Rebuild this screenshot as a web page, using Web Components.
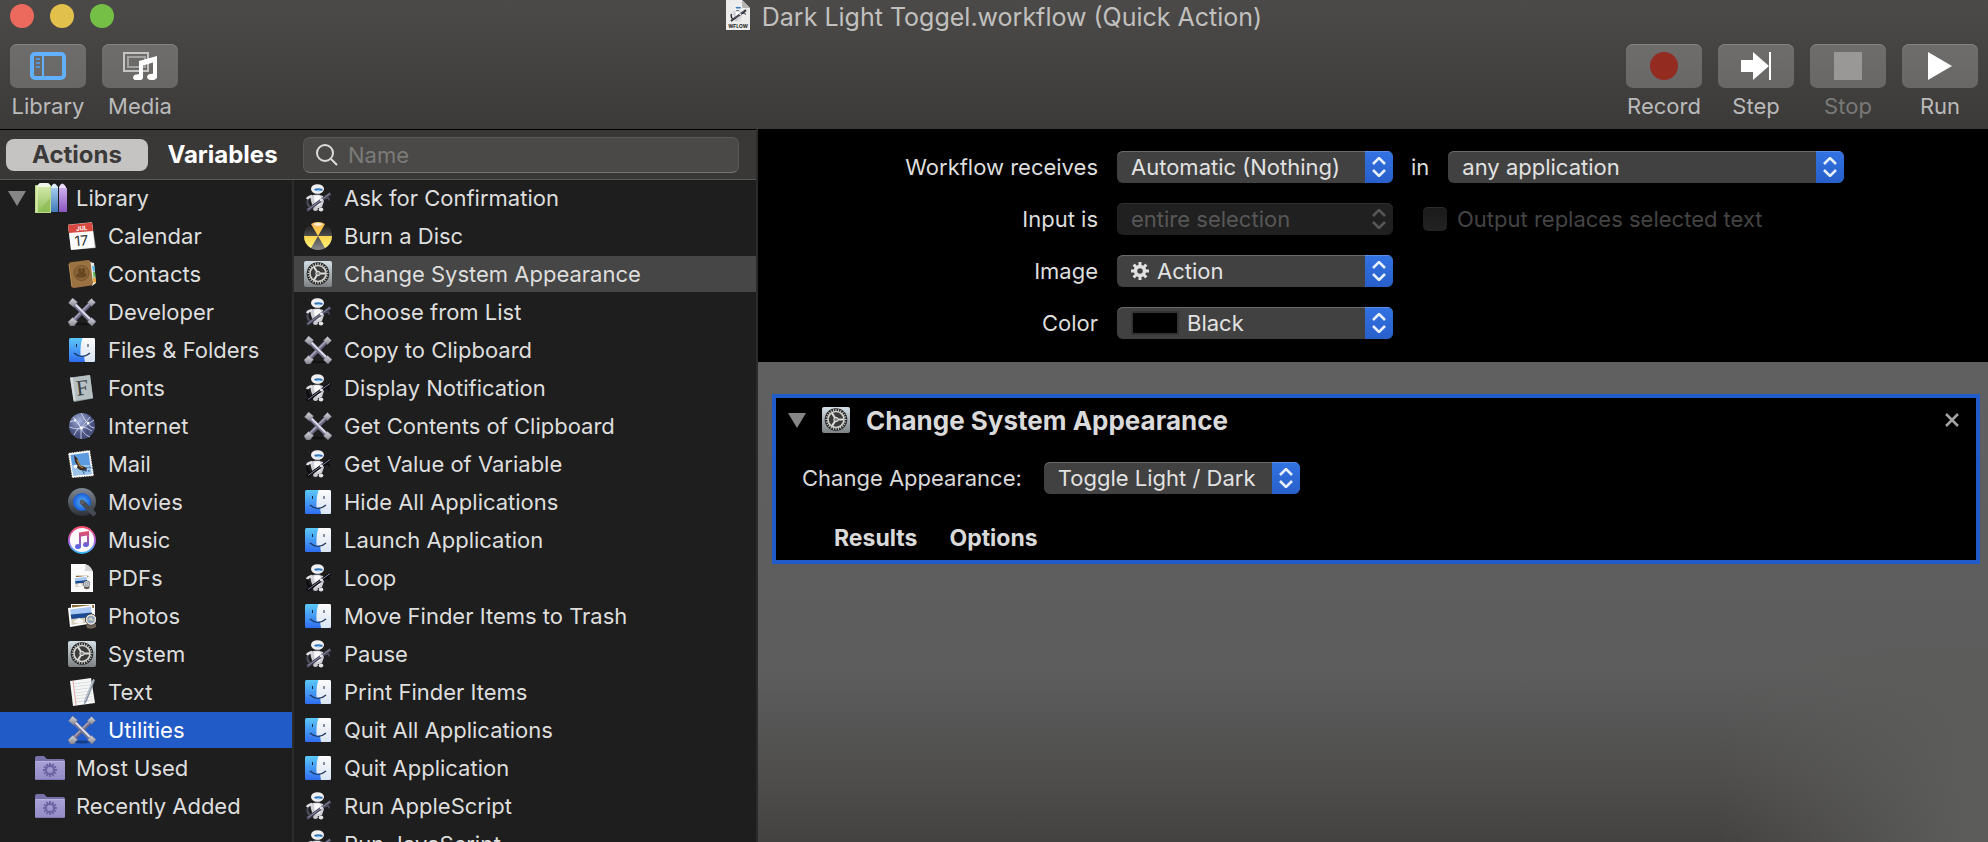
<!DOCTYPE html>
<html lang="en">
<head>
<meta charset="utf-8">
<title>Dark Light Toggel.workflow (Quick Action)</title>
<style>
    html, body {
        height: 100%;
        margin: 0;
    }

    body {
        overflow: hidden;
        background: #1e1e1e;
        font-family: Inter, "Liberation Sans", sans-serif;
        font-size: 22px;
        color: #dedede;
    }
</style>
</head>
<body>
<automator-window></automator-window>

<script>
//Icon drawings, all on a 28x28 grid unless a viewBox is given
function gearTeeth(count, cx, cy, inner, outer, width, color) {
    let out = "";
    for (let i = 0; i < count; i++) {
        out += `<rect x="${cx - width / 2}" y="${cy - outer}" width="${width}" height="${outer - inner}" fill="${color}" transform="rotate(${i * 360 / count} ${cx} ${cy})"/>`;
    }
    return out;
}

function robot(shade) {
    return `
        <path d="M4 15q-2 5 2 8" fill="none" stroke="${shade}" stroke-width="2"/>
        <ellipse cx="11.500" cy="25" rx="2.500" ry="2" fill="#c9c9cf"/>
        <ellipse cx="17" cy="25.500" rx="2.300" ry="2" fill="#e2e2e6"/>
        <path d="M6 12q6-3 13 0l1 5-2 6q-5 2.500-9 0l-2-6z" fill="#cfcfd7"/>
        <path d="M10 12q5-2 7 1l-1 8-5 1z" fill="#fbfbfd"/>
        <path d="M11 9h5v2h-5z" fill="#55555f"/>
        <path d="M8 12q-4 1-5 3" fill="none" stroke="#dfdfe5" stroke-width="2.500"/>
        <ellipse cx="13.500" cy="5" rx="6.500" ry="4.800" fill="#f1f1f4"/>
        <path d="M10 5q4-1.500 8.500 0v1.500q-4 1.500-7.500 0z" fill="#2f6fb4"/>
        <path d="M11.500 6.300q3-1 6 0-3 1.300-6 0z" fill="#8fd0ff"/>
        <path d="M3 26.500L26.500 9.500" stroke="${shade}" stroke-width="3"/>
        <path d="M20 14.500l4.500-.5 1 2.500" fill="none" stroke="${shade}" stroke-width="1.500"/>
        <path d="M4 25.500L26 9.500" stroke="#9090a8" stroke-width=".9"/>
        <circle cx="17.500" cy="16" r="1.600" fill="#e8e8ee"/>`;
}

const FINDER = `
    <rect x="1" y="2" width="26" height="24" rx="1.500" fill="url(#fl)"/>
    <path d="M14.500 2H25.500q1.500 0 1.500 1.500V24.500q0 1.500-1.500 1.500H17q-.7-3-.8-6.500H12.500Q12 9 14.500 2z" fill="url(#fr)"/>
    <path d="M8.500 8v3M20 8v3" stroke="#1c2b44" stroke-width="1"/>
    <path d="M6 17q8 7 16 0" fill="none" stroke="#1c3558" stroke-width="1.200"/>
    <defs>
        <linearGradient id="fl" x2="0" y2="1"><stop stop-color="#5cc8f8"/><stop offset="1" stop-color="#2f6df0"/></linearGradient>
        <linearGradient id="fr" x2="0" y2="1"><stop stop-color="#fbfbfc"/><stop offset="1" stop-color="#d9e4f3"/></linearGradient>
    </defs>`;

const TOOLS = `
    <defs>
        <linearGradient id="tm" x2="0" y2="1"><stop stop-color="#d6d6de"/><stop offset="1" stop-color="#85858f"/></linearGradient>
    </defs>
    <ellipse cx="14" cy="26" rx="9" ry="1.500" fill="#000" opacity=".35"/>
    <path d="M22 6L6 22" stroke="#6c6885" stroke-width="4"/>
    <path d="M21.500 5.500L5.500 21.500" stroke="#a9a8bd" stroke-width="1.500"/>
    <g fill="url(#tm)" stroke="#77778a" stroke-width=".5">
        <path d="M23.500.500l4 4-4 4-4-4z"/>
        <path d="M4.500 19.500l5 4-3.500 4.500H2.500L0 24z"/>
    </g>
    <path d="M6 6l17 17" stroke="#77748f" stroke-width="4"/>
    <path d="M6.500 5.500l17 17" stroke="#ddddea" stroke-width="1.800"/>
    <g fill="url(#tm)" stroke="#77778a" stroke-width=".5">
        <path d="M4.500 0l5 4-4 5-5-4z"/>
        <path d="M23.500 19.500l4.500 4-4 4.500-4.500-4z"/>
    </g>`;

const SYSTEM = `
    <defs><linearGradient id="sy" x2="0" y2="1"><stop stop-color="#d3e0e6"/><stop offset="1" stop-color="#7c8083"/></linearGradient></defs>
    <rect y="1" width="28" height="26" rx="2" fill="url(#sy)"/>
    <circle cx="14" cy="13.500" r="11.300" fill="#1e1e1f"/>
    ${gearTeeth(24, 14, 13.5, 8, 10.6, 1.2, "#b9b9b7")}
    <circle cx="14" cy="13.500" r="8" fill="#3b3b3b" stroke="#cfcfca" stroke-width="1.600"/>
    <path d="M14 13.500h7.500M14 13.500l-4-6.500M14 13.500L10 20" stroke="#dededa" stroke-width="2"/>
    <circle cx="14" cy="13.500" r="2.200" fill="#8a8a88" stroke="#e6e6e2" stroke-width="1"/>`;

const PHOTOS = `
    <path d="M3 2l24 0v19l-24 0z" fill="#fff"/>
    <path d="M4 3h22v3H4z" fill="#8a6a35"/>
    <path d="M0 6l24-3 2 18-24 4z" fill="#fff"/>
    <path d="M2 7.500l21-2.700.6 6-20.800 2z" fill="#a9c9f4"/>
    <path d="M2.700 12.500l21-2 .7 5-21 2z" fill="#1d4b93"/>
    <path d="M3.200 17l21-2 .4 4.500-21 3.500z" fill="#d4cdb9"/>
    <path d="M5 20l6-4 5 3-4 3z" fill="#f7f7f7"/>
    <path d="M18 22h10v3q-4 3-9 1z" fill="#6b6154"/>
    <circle cx="23" cy="17.500" r="5.500" fill="#5f6c80" stroke="#262626" stroke-width="1"/>
    <circle cx="23" cy="17.500" r="4.500" fill="#8da3bf" stroke="#e9e4da" stroke-width="1.500"/>
    <path d="M20 18l3-3 3 4z" fill="#d5cdb5"/>`;

const FOLDER = `
    <path d="M1 4q0-2 2-2h7l3 3h16q2 0 2 2v4H1z" fill="#7771aa"/>
    <rect x="1" y="7" width="30" height="19" rx="1.500" fill="url(#fo)"/>
    <path d="M2 25.500h28" stroke="#8078b4"/>
    <path d="M1.500 7.500h29" stroke="#b6b1de"/>
    ${gearTeeth(12, 16, 16, 4, 7, 2, "#6c64a2")}
    <circle cx="16" cy="16" r="4" fill="none" stroke="#6c64a2" stroke-width="2"/>
    <defs><linearGradient id="fo" x2="0" y2="1"><stop stop-color="#a8a2d6"/><stop offset="1" stop-color="#928bc6"/></linearGradient></defs>`;

const ICONS = {
    library: ["0 0 32 32", `
        <defs>
            <linearGradient id="l1" x2="0" y2="1"><stop stop-color="#d3e8ac"/><stop offset="1" stop-color="#8fbf58"/></linearGradient>
            <linearGradient id="l2" x2="0" y2="1"><stop stop-color="#a5cbee"/><stop offset="1" stop-color="#3f78b8"/></linearGradient>
            <linearGradient id="l3" x2="0" y2="1"><stop stop-color="#cdb0ee"/><stop offset="1" stop-color="#8a55c0"/></linearGradient>
        </defs>
        <path d="M0 4q0-1 1-1h2q1-2 3-2h6q2 0 3 2h1v28H0z" fill="#b9d98b"/>
        <path d="M3 3q1-2 3-2h6q2 0 3 2v2H2z" fill="#f1f5ea"/>
        <path d="M2 5h13v25H2z" fill="url(#l1)"/>
        <path d="M15 30V16L8 24 6 30z" fill="#8cbb52" opacity=".6"/>
        <path d="M16 5q3-7 7 0v25h-7z" fill="#dfeefa"/>
        <path d="M16 6h7v24h-7z" fill="url(#l2)"/>
        <path d="M24 5q3-7 7 0v25h-7z" fill="#eadff7"/>
        <path d="M24 6h8v24h-8z" fill="url(#l3)"/>
        <path d="M2 4v26" stroke="#f6f5c0"/>`],
    calendar: ["0 0 28 28", `
        <path d="M0 2.500L24 0l4 26-25 2z" fill="#8d8d8d"/>
        <path d="M0 3L24 .5 27 25.500 3 28z" fill="#fbfbfb"/>
        <path d="M0 3L24 .5 25 9 1 11z" fill="#d8483f"/>
        <text x="8" y="8.500" font-size="6" font-weight="700" fill="#fff" transform="rotate(-5 13 6)">JUL</text>
        <text x="6.500" y="23.500" font-size="14" fill="#333" transform="rotate(-5 14 18)">17</text>`],
    contacts: ["0 0 28 28", `
        <path d="M22 2l4 1 2 20-4 3z" fill="#e9e9e4"/>
        <path d="M24 6l2.500 0 .5 5-2 .5z" fill="#58b7e8"/>
        <path d="M25 12h2l.5 5-2 .5z" fill="#63b652"/>
        <path d="M25 18h2.500l.5 4-2.500 1z" fill="#eda32e"/>
        <path d="M1 4Q1 2.500 2.500 2.300L20 0q2 0 2.300 1.500L25 23q0 2-2 2.400L6 28q-2 0-2.300-2z" fill="#9a7140"/>
        <path d="M1 4l3 23" stroke="#b98d56"/>
        <circle cx="13.500" cy="13" r="7.500" fill="#8b6537" stroke="#765128"/>
        <path d="M8 16.500q0-3 2.500-3.500-1-4.500 1-5 2.500 0 1.700 4l.8 0q-.8-4 1.500-4 2.500.8 1 5 2.500.5 2.500 2.500-5 4-11 1z" fill="#654721"/>`],
    tools: ["0 0 28 28", TOOLS],
    finder: ["0 0 28 28", FINDER],
    fonts: ["0 0 28 28", `
        <path d="M2 3.500L22 1l3 23.500L6 28z" fill="#8e989b"/>
        <path d="M5 3.500L22 1l3 23-17 2.500z" fill="#b6bfc2"/>
        <path d="M2 3.500l3.500 23.500 2.500-.5-3-23z" fill="#d3dadd"/>
        <text x="8" y="21" font-family="Liberation Serif, serif" font-size="22" fill="#3a4042" transform="rotate(-7 14 14)">F</text>`],
    internet: ["0 0 28 28", `
        <defs><radialGradient id="gl" cx=".4" cy=".3"><stop stop-color="#a7b3dc"/><stop offset="1" stop-color="#47507f"/></radialGradient></defs>
        <circle cx="14" cy="14" r="13" fill="url(#gl)"/>
        <path d="M5 5q6 5 8 11t9 9M1.500 15q8 3 12 1T26 8M13 1q3 7 10 14l3.500 1M6 23q4-8 8-8t10 4M13 27V16L22 5M2 10q6-4 11 6" fill="none" stroke="#dfe4f7" stroke-width=".8"/>
        <circle cx="13.500" cy="16" r="1.500" fill="#fff"/>
        <circle cx="20" cy="11" r="1.200" fill="#fff"/>
        <circle cx="7" cy="8" r="1" fill="#fff"/>`],
    mail: ["0 0 28 28", `
        <path d="M0 3L22 0l4 26-22 2z" fill="#f6f6f6"/>
        <path d="M0 3L22 0l4 26-22 2z" fill="none" stroke="#1e1e1e" stroke-width="1" stroke-dasharray="1 1.500"/>
        <path d="M2.500 5L20.500 2.600l3 21.400-18 1.600z" fill="#5d9be0"/>
        <path d="M3.500 15l19 0 1 9-18 1.600z" fill="#9cc5ee"/>
        <path d="M6 5l3 3 3 7 7 3-1 3-6-1-4-3 2-1-3-4z" fill="#382a1d"/>
        <path d="M9 10l3 6 3 2" stroke="#a67b46" stroke-width="1.500" fill="none"/>
        <circle cx="7.500" cy="16.500" r="1.800" fill="#fff"/>
        <path d="M14 21h9M16 24a5 5 0 0 1 10-3" stroke="#2a5a90" fill="none" stroke-dasharray="2 1"/>`],
    movies: ["0 0 28 28", `
        <defs>
            <linearGradient id="qt" x2="0" y2="1"><stop stop-color="#7f8893"/><stop offset="1" stop-color="#2b3036"/></linearGradient>
            <radialGradient id="qb"><stop stop-color="#5cb4fb"/><stop offset="1" stop-color="#155bd8"/></radialGradient>
        </defs>
        <circle cx="14" cy="14" r="14" fill="url(#qt)"/>
        <circle cx="14" cy="14" r="9" fill="url(#qb)"/>
        <path d="M14 14L27 27" stroke="#454c54" stroke-width="5"/>
        <circle cx="14" cy="14" r="2.500" fill="#565d66"/>`],
    music: ["0 0 28 28", `
        <defs>
            <linearGradient id="mu" x2="0" y2="1"><stop stop-color="#f4506a"/><stop offset=".55" stop-color="#b565ea"/><stop offset="1" stop-color="#34b8f5"/></linearGradient>
            <linearGradient id="mn" x2="0" y2="1"><stop stop-color="#ee4b66"/><stop offset="1" stop-color="#4a66f2"/></linearGradient>
        </defs>
        <circle cx="14" cy="14" r="13" fill="#fbf9fc" stroke="url(#mu)" stroke-width="1.800"/>
        <path d="M11 6.500L21 5v13.500a3 2.400 0 1 1-2-2.200V9.500L13 10.500V20.500a3 2.400 0 1 1-2-2.200z" fill="url(#mn)"/>`],
    pdfs: ["0 0 28 28", `
        <path d="M3 0h14q6 2 8 8v20H3z" fill="#fbfbfb"/>
        <path d="M17 0q1 5-.5 7.500Q21 6 25 8q-2-6-8-8z" fill="#d3d3d3"/>
        <svg x="5" y="10" width="17" height="16" viewBox="0 0 28 28">${PHOTOS}</svg>`],
    photos: ["0 0 28 28", PHOTOS],
    system: ["0 0 28 28", SYSTEM],
    text: ["0 0 28 28", `
        <path d="M2 3L23 0l4 25-22 3z" fill="#f7f7f5"/>
        <path d="M5 6l17-2.200M5.500 9l17-2.200M6 12l17-2.200M6.500 15l17-2.200M7 18l17-2.200M7.500 21l17-2.200M8 24l17-2.200" stroke="#ccd1da" stroke-width=".7"/>
        <path d="M5 3l3 24" stroke="#e7a8a8" stroke-width="1"/>
        <path d="M25 1l2 1-8 21-3 4 .5-5z" fill="#8794a3"/>
        <path d="M25.500 1.500L17 23" stroke="#d4dce4" stroke-width=".8"/>`],
    folder: ["0 0 32 28", FOLDER],
    robot: ["0 0 28 28", robot("#4c4c60")],
    "robot-dark": ["0 0 28 28", robot("#0a0a10")],
    burn: ["0 0 28 28", `
        <defs>
            <linearGradient id="by" x2="0" y2="1"><stop stop-color="#f7b558"/><stop offset=".5" stop-color="#fbd34a"/><stop offset="1" stop-color="#fff27a"/></linearGradient>
            <linearGradient id="bk" x2="0" y2="1"><stop stop-color="#111"/><stop offset="1" stop-color="#8b8b8b"/></linearGradient>
        </defs>
        <circle cx="14" cy="14" r="14" fill="url(#bk)"/>
        <path d="M14 14L7 2a14 14 0 0 1 14 0zM14 14H28a14 14 0 0 1-7 12zM14 14H0a14 14 0 0 0 7 12z" fill="url(#by)"/>
        <path d="M9 2q5-2.500 10 0-5 4-10 0z" fill="#fff" opacity=".75"/>`],
    sidebar: ["0 0 36 28", `
        <rect x="2" y="2" width="32" height="24" rx="3" fill="none" stroke="#62b0fc" stroke-width="4"/>
        <path d="M13 2v24" stroke="#62b0fc" stroke-width="2"/>
        <path d="M6 7h4M6 11h4M6 15h4" stroke="#5a94d8" stroke-width="2"/>`],
    media: ["0 0 34 28", `
        <rect x="1" y="1" width="24" height="18" fill="none" stroke="#c4c4c3" stroke-width="2"/>
        <rect x="5" y="5" width="17" height="10" fill="none" stroke="#a3a3a2" stroke-width="2"/>
        <path d="M16 9l18-5v20.500a5 3.300 0 1 1-4-2.800V10.500l-10 3V25a5 3.300 0 1 1-4-2.800z" fill="#fff"/>`],
    record: ["0 0 28 28", `<circle cx="14" cy="14" r="14" fill="#932b21"/>`],
    step: ["0 0 30 28", `<path d="M0 8h12V0l16 14-16 14v-8H0z" fill="#fff"/><path d="M29 0v28" stroke="#fff" stroke-width="2"/>`],
    stop: ["0 0 28 28", `<path d="M0 0h28v28H0z" fill="#999896"/>`],
    run: ["0 0 24 28", `<path d="M0 0l24 14L0 28z" fill="#fff"/>`],
    search: ["0 0 22 22", `<circle cx="9" cy="9" r="8" fill="none" stroke="#dcdcdb" stroke-width="2"/><path d="M15 15l6 6" stroke="#dcdcdb" stroke-width="2"/>`],
    triangle: ["0 0 18 15", `<path d="M0 0h18L9 15z" fill="#868686"/>`],
    updown: ["0 0 14 20", `<path d="M1 7l6-6 6 6M1 13l6 6 6-6" fill="none" stroke="currentColor" stroke-width="2.500"/>`],
    gear: ["0 0 18 18", `${gearTeeth(8, 9, 9, 5, 9, 3, "#e2e2e2")}<circle cx="9" cy="9" r="4.500" fill="none" stroke="#e2e2e2" stroke-width="3.500"/>`],
    close: ["0 0 14 14", `<path d="M1 1l12 12M13 1L1 13" stroke="#a4a4a4" stroke-width="2.500"/>`],
    document: ["0 0 24 30", `
        <path d="M0 0h16l8 8v22H0z" fill="#ececec"/>
        <path d="M16 0v8h8z" fill="#b4b4b4"/>
        <svg x="3" y="4" width="18" height="18" viewBox="0 0 28 28">${robot("#1c1c24")}</svg>
        <text x="12" y="28" font-size="5" font-weight="700" text-anchor="middle" fill="#222">WFLOW</text>`]
};

class MacIcon extends HTMLElement
{
    constructor()
    {
        super();
        this.attachShadow({mode: "open"});
    }

    connectedCallback() {
        const [box, body] = ICONS[this.getAttribute("name")];
        const [, , width, height] = box.split(" ");
        this.shadowRoot.innerHTML = `
            <style>
                :host {
                    display: block;
                    flex: none;
                }

                svg {
                    display: block;
                }
            </style>
            <svg width="${width}" height="${height}" viewBox="${box}" aria-hidden="true">${body}</svg>
        `;
    }
}

class ToolButton extends HTMLElement
{
    constructor()
    {
        super();
        this.attachShadow({mode: "open"});
    }

    connectedCallback() {
        const disabled = this.hasAttribute("disabled") ? "disabled" : "";
        this.shadowRoot.innerHTML = `
            <style>
                :host {
                    display: block;
                }

                button {
                    display: flex;
                    flex-direction: column;
                    align-items: center;
                    gap: 5px;
                    width: 76px;
                    padding: 0;
                    border: 0;
                    background: none;
                    font: inherit;
                    line-height: 26px;
                    color: #bababa;
                }

                button:disabled {
                    color: #797977;
                }

                .face {
                    display: grid;
                    place-items: center;
                    width: 100%;
                    height: 44px;
                    border-radius: 7px;
                    background: linear-gradient(#6e6d6b, #686765);
                    box-shadow: inset 0 1px #82817f;
                }
            </style>
            <button type="button" ${disabled}>
                <span class="face"><mac-icon name="${this.getAttribute("icon")}"></mac-icon></span>
                <slot></slot>
            </button>
        `;
    }
}

//Label + pop-up menu. Slotted content sits in front of the menu text
class PopupField extends HTMLElement
{
    constructor()
    {
        super();
        this.attachShadow({mode: "open"});
    }

    connectedCallback() {
        const disabled = this.hasAttribute("disabled") ? "disabled" : "";
        this.shadowRoot.innerHTML = `
            <style>
                :host {
                    display: flex;
                    align-items: center;
                    gap: 19px;
                }

                label {
                    width: var(--label-width, auto);
                    text-align: right;
                    white-space: nowrap;
                }

                .box {
                    display: flex;
                    align-items: center;
                    width: var(--popup-width, 276px);
                    height: 32px;
                    border-radius: 6px;
                    overflow: hidden;
                    background: #414141;
                    box-shadow: inset 0 1px #6a6a6a;
                }

                ::slotted(*) {
                    flex: none;
                    margin-left: 14px;
                    margin-right: -6px;
                }

                select {
                    flex: 1;
                    min-width: 0;
                    height: 32px;
                    margin: 0;
                    padding: 0 0 0 14px;
                    border: 0;
                    appearance: none;
                    background: none;
                    font: inherit;
                    color: #e2e2e2;
                    opacity: 1;
                }

                .arrows {
                    display: grid;
                    place-items: center;
                    width: 28px;
                    height: 32px;
                    background: linear-gradient(#3272e2, #2860cb);
                    box-shadow: inset 0 1px #5b90ea;
                    color: #e8effc;
                }

                .disabled {
                    background: #202020;
                    box-shadow: inset 0 1px #303030;
                }

                .disabled select {
                    color: #575757;
                }

                .disabled .arrows {
                    background: none;
                    box-shadow: none;
                    color: #575757;
                }
            </style>
            <label for="menu">${this.getAttribute("label")}</label>
            <span class="box ${disabled}">
                <slot></slot>
                <select id="menu" ${disabled}><option>${this.getAttribute("value")}</option></select>
                <span class="arrows"><mac-icon name="updown"></mac-icon></span>
            </span>
        `;
    }
}

class SourceRow extends HTMLElement
{
    constructor()
    {
        super();
        this.attachShadow({mode: "open"});
    }

    connectedCallback() {
        const level = this.getAttribute("level");
        this.shadowRoot.innerHTML = `
            <style>
                :host {
                    display: block;
                }

                button {
                    display: flex;
                    align-items: center;
                    gap: 12px;
                    width: 100%;
                    height: 36px;
                    padding: 0 0 0 10px;
                    border: 0;
                    background: none;
                    font: inherit;
                    color: inherit;
                    text-align: left;
                    white-space: nowrap;
                }

                .root {
                    gap: 9px;
                    padding-left: 8px;
                }

                .folder {
                    gap: 10px;
                    padding-left: 34px;
                }

                .child {
                    padding-left: 68px;
                }

                :host([selected]) button {
                    background: var(--selection);
                    color: var(--selection-text, inherit);
                }
            </style>
            <button type="button" class="${level}">
                ${level === "root" ? `<mac-icon name="triangle"></mac-icon>` : ""}
                <mac-icon name="${this.getAttribute("icon")}"></mac-icon>
                <slot></slot>
            </button>
        `;
    }
}

class WindowHeader extends HTMLElement
{
    constructor()
    {
        super();
        this.attachShadow({mode: "open"}).innerHTML = `
            <style>
                :host {
                    display: block;
                    flex: none;
                    background: linear-gradient(#4b4a48, #3b3a38);
                }

                .titlebar {
                    display: grid;
                    grid-template-columns: 1fr auto 1fr;
                    align-items: center;
                    height: 34px;
                }

                .lights {
                    display: flex;
                    gap: 16px;
                    padding: 0 0 2px 10px;
                }

                .lights button {
                    width: 24px;
                    height: 24px;
                    padding: 0;
                    border: 0;
                    border-radius: 50%;
                }

                h1 {
                    display: flex;
                    align-items: center;
                    gap: 12px;
                    margin: 0;
                    font-size: 25px;
                    font-weight: 400;
                    line-height: 34px;
                    color: #c1c0bf;
                }

                h1 mac-icon {
                    padding-bottom: 4px;
                }

                .toolbar {
                    display: flex;
                    gap: 16px;
                    padding: 10px;
                }

                .space {
                    flex: 1;
                }
            </style>
            <div class="titlebar">
                <div class="lights">
                    <button type="button" aria-label="Close" style="background: #ec695e"></button>
                    <button type="button" aria-label="Minimize" style="background: #e1c04c"></button>
                    <button type="button" aria-label="Zoom" style="background: #76bf47"></button>
                </div>
                <h1><mac-icon name="document"></mac-icon>Dark Light Toggel.workflow (Quick Action)</h1>
            </div>
            <div class="toolbar">
                <tool-button icon="sidebar">Library</tool-button>
                <tool-button icon="media">Media</tool-button>
                <span class="space"></span>
                <tool-button icon="record">Record</tool-button>
                <tool-button icon="step">Step</tool-button>
                <tool-button icon="stop" disabled>Stop</tool-button>
                <tool-button icon="run">Run</tool-button>
            </div>
        `;
    }
}

const CATEGORIES = [
    ["root", "library", "Library"],
    ["child", "calendar", "Calendar"],
    ["child", "contacts", "Contacts"],
    ["child", "tools", "Developer"],
    ["child", "finder", "Files &amp; Folders"],
    ["child", "fonts", "Fonts"],
    ["child", "internet", "Internet"],
    ["child", "mail", "Mail"],
    ["child", "movies", "Movies"],
    ["child", "music", "Music"],
    ["child", "pdfs", "PDFs"],
    ["child", "photos", "Photos"],
    ["child", "system", "System"],
    ["child", "text", "Text"],
    ["child", "tools", "Utilities"],
    ["folder", "folder", "Most Used"],
    ["folder", "folder", "Recently Added"]
];

const ACTIONS = [
    ["action", "robot", "Ask for Confirmation"],
    ["action", "burn", "Burn a Disc"],
    ["action", "system", "Change System Appearance"],
    ["action", "robot", "Choose from List"],
    ["action", "tools", "Copy to Clipboard"],
    ["action", "robot-dark", "Display Notification"],
    ["action", "tools", "Get Contents of Clipboard"],
    ["action", "robot-dark", "Get Value of Variable"],
    ["action", "finder", "Hide All Applications"],
    ["action", "finder", "Launch Application"],
    ["action", "robot-dark", "Loop"],
    ["action", "finder", "Move Finder Items to Trash"],
    ["action", "robot", "Pause"],
    ["action", "finder", "Print Finder Items"],
    ["action", "finder", "Quit All Applications"],
    ["action", "finder", "Quit Application"],
    ["action", "robot", "Run AppleScript"],
    ["action", "robot", "Run JavaScript"]
];

function rows(list, selected) {
    return list.map(([level, icon, name]) =>
        `<source-row level="${level}" icon="${icon}" ${name === selected ? "selected" : ""}>${name}</source-row>`
    ).join("");
}

class LibraryPane extends HTMLElement
{
    constructor()
    {
        super();
        this.attachShadow({mode: "open"}).innerHTML = `
            <style>
                :host {
                    display: flex;
                    flex-direction: column;
                    flex: none;
                    width: 756px;
                    min-height: 0;
                    border-right: 2px solid #2b2b2b;
                    background: #1e1e1e;
                }

                .bar {
                    display: flex;
                    align-items: center;
                    flex: none;
                    height: 49px;
                    padding: 0 17px 0 6px;
                    border-top: 1px solid #000;
                    border-bottom: 1px solid #5a5a59;
                    box-sizing: content-box;
                    background: #393836;
                }

                .bar button {
                    height: 32px;
                    padding: 0;
                    border: 0;
                    border-radius: 8px;
                    background: none;
                    font: inherit;
                    font-size: 24px;
                    font-weight: 700;
                    color: #fff;
                }

                .tab-actions {
                    width: 142px;
                }

                .tab-variables {
                    width: 149px;
                }

                .bar .active {
                    background: #c5c4c3;
                    color: #3b3a38;
                }

                .search {
                    display: flex;
                    align-items: center;
                    flex: 1;
                    gap: 10px;
                    height: 34px;
                    margin-left: 6px;
                    padding-left: 12px;
                    border: 1px solid #5a5957;
                    border-bottom-color: #757472;
                    border-radius: 7px;
                    background: #4a4947;
                }

                input {
                    flex: 1;
                    min-width: 0;
                    padding: 0;
                    border: 0;
                    outline: 0;
                    background: none;
                    font: inherit;
                    color: #dedede;
                }

                input::placeholder {
                    color: #7c7b79;
                    opacity: 1;
                }

                .columns {
                    display: flex;
                    flex: 1;
                    min-height: 0;
                }

                nav {
                    display: flex;
                    flex-direction: column;
                    gap: 2px;
                    overflow: hidden;
                }

                .categories {
                    width: 292px;
                    border-right: 2px solid #2b2b2b;
                    --selection: #215bc8;
                    --selection-text: #fff;
                }

                .actions {
                    flex: 1;
                    --selection: #464646;
                }
            </style>
            <div class="bar">
                <button type="button" class="tab-actions active">Actions</button>
                <button type="button" class="tab-variables">Variables</button>
                <label class="search">
                    <mac-icon name="search"></mac-icon>
                    <input type="text" placeholder="Name" aria-label="Name">
                </label>
            </div>
            <div class="columns">
                <nav class="categories">${rows(CATEGORIES, "Utilities")}</nav>
                <nav class="actions">${rows(ACTIONS, "Change System Appearance")}</nav>
            </div>
        `;
    }
}

class WorkflowSettings extends HTMLElement
{
    constructor()
    {
        super();
        this.attachShadow({mode: "open"}).innerHTML = `
            <style>
                :host {
                    display: flex;
                    flex-direction: column;
                    gap: 20px;
                    padding: 22px 0 23px;
                    background: #000;
                    --label-width: 340px;
                }

                .row {
                    display: flex;
                    align-items: center;
                    gap: 18px;
                }

                .target {
                    --label-width: auto;
                    --popup-width: 396px;
                }

                .check {
                    display: flex;
                    align-items: center;
                    gap: 10px;
                    margin-left: 12px;
                    color: #444;
                }

                input {
                    width: 24px;
                    height: 24px;
                    margin: 0;
                    border-radius: 5px;
                    appearance: none;
                    background: linear-gradient(#1a1a1a, #232323);
                    box-shadow: inset 0 1px #2c2c2c;
                }

                .swatch {
                    width: 44px;
                    height: 20px;
                    border: 2px solid #343434;
                    background: #000;
                }
            </style>
            <div class="row">
                <popup-field label="Workflow receives" value="Automatic (Nothing)"></popup-field>
                <popup-field class="target" label="in" value="any application"></popup-field>
            </div>
            <div class="row">
                <popup-field label="Input is" value="entire selection" disabled></popup-field>
                <label class="check"><input type="checkbox" disabled>Output replaces selected text</label>
            </div>
            <popup-field label="Image" value="Action"><mac-icon name="gear"></mac-icon></popup-field>
            <popup-field label="Color" value="Black"><span class="swatch"></span></popup-field>
        `;
    }
}

class ActionCard extends HTMLElement
{
    constructor()
    {
        super();
        this.attachShadow({mode: "open"}).innerHTML = `
            <style>
                :host {
                    display: block;
                    border: 4px solid #215bc8;
                    background: #000;
                    color: #dadada;
                }

                header {
                    display: flex;
                    align-items: center;
                    gap: 16px;
                    height: 44px;
                    padding: 0 17px 0 12px;
                }

                h2 {
                    flex: 1;
                    margin: 0;
                    font-size: 26px;
                    font-weight: 700;
                }

                button {
                    padding: 0;
                    border: 0;
                    background: none;
                    font: inherit;
                    font-size: 23px;
                    font-weight: 700;
                    color: inherit;
                }

                .parameter {
                    padding: 20px 26px 28px;
                    --popup-width: 256px;
                }

                popup-field {
                    gap: 22px;
                }

                footer {
                    display: flex;
                    gap: 32px;
                    padding: 0 58px 6px;
                    line-height: 32px;
                }
            </style>
            <header>
                <button type="button" aria-label="Collapse"><mac-icon name="triangle"></mac-icon></button>
                <mac-icon name="system"></mac-icon>
                <h2>Change System Appearance</h2>
                <button type="button" aria-label="Remove"><mac-icon name="close"></mac-icon></button>
            </header>
            <div class="parameter">
                <popup-field label="Change Appearance:" value="Toggle Light / Dark"></popup-field>
            </div>
            <footer>
                <button type="button">Results</button>
                <button type="button">Options</button>
            </footer>
        `;
    }
}

class AutomatorWindow extends HTMLElement
{
    constructor()
    {
        super();
        this.attachShadow({mode: "open"}).innerHTML = `
            <style>
                :host {
                    display: flex;
                    flex-direction: column;
                    height: 100vh;
                }

                .content {
                    display: flex;
                    flex: 1;
                    min-height: 0;
                }

                main {
                    display: flex;
                    flex-direction: column;
                    flex: 1;
                    min-width: 0;
                }

                /* dark glow along the bottom, fading out towards the right edge */
                .canvas {
                    flex: 1;
                    padding: 32px 8px 0 14px;
                    background:
                        linear-gradient(to right, transparent 78%, #5c5c5b 98%) bottom / 100% 40% no-repeat,
                        linear-gradient(transparent 65%, #4f4e4d 86%, #434241),
                        linear-gradient(#606060, #5b5b5b);
                }
            </style>
            <window-header></window-header>
            <div class="content">
                <library-pane></library-pane>
                <main>
                    <workflow-settings></workflow-settings>
                    <div class="canvas"><action-card></action-card></div>
                </main>
            </div>
        `;
    }
}

customElements.define("mac-icon", MacIcon);
customElements.define("tool-button", ToolButton);
customElements.define("popup-field", PopupField);
customElements.define("source-row", SourceRow);
customElements.define("window-header", WindowHeader);
customElements.define("library-pane", LibraryPane);
customElements.define("workflow-settings", WorkflowSettings);
customElements.define("action-card", ActionCard);
customElements.define("automator-window", AutomatorWindow);
</script>
</body>
</html>
